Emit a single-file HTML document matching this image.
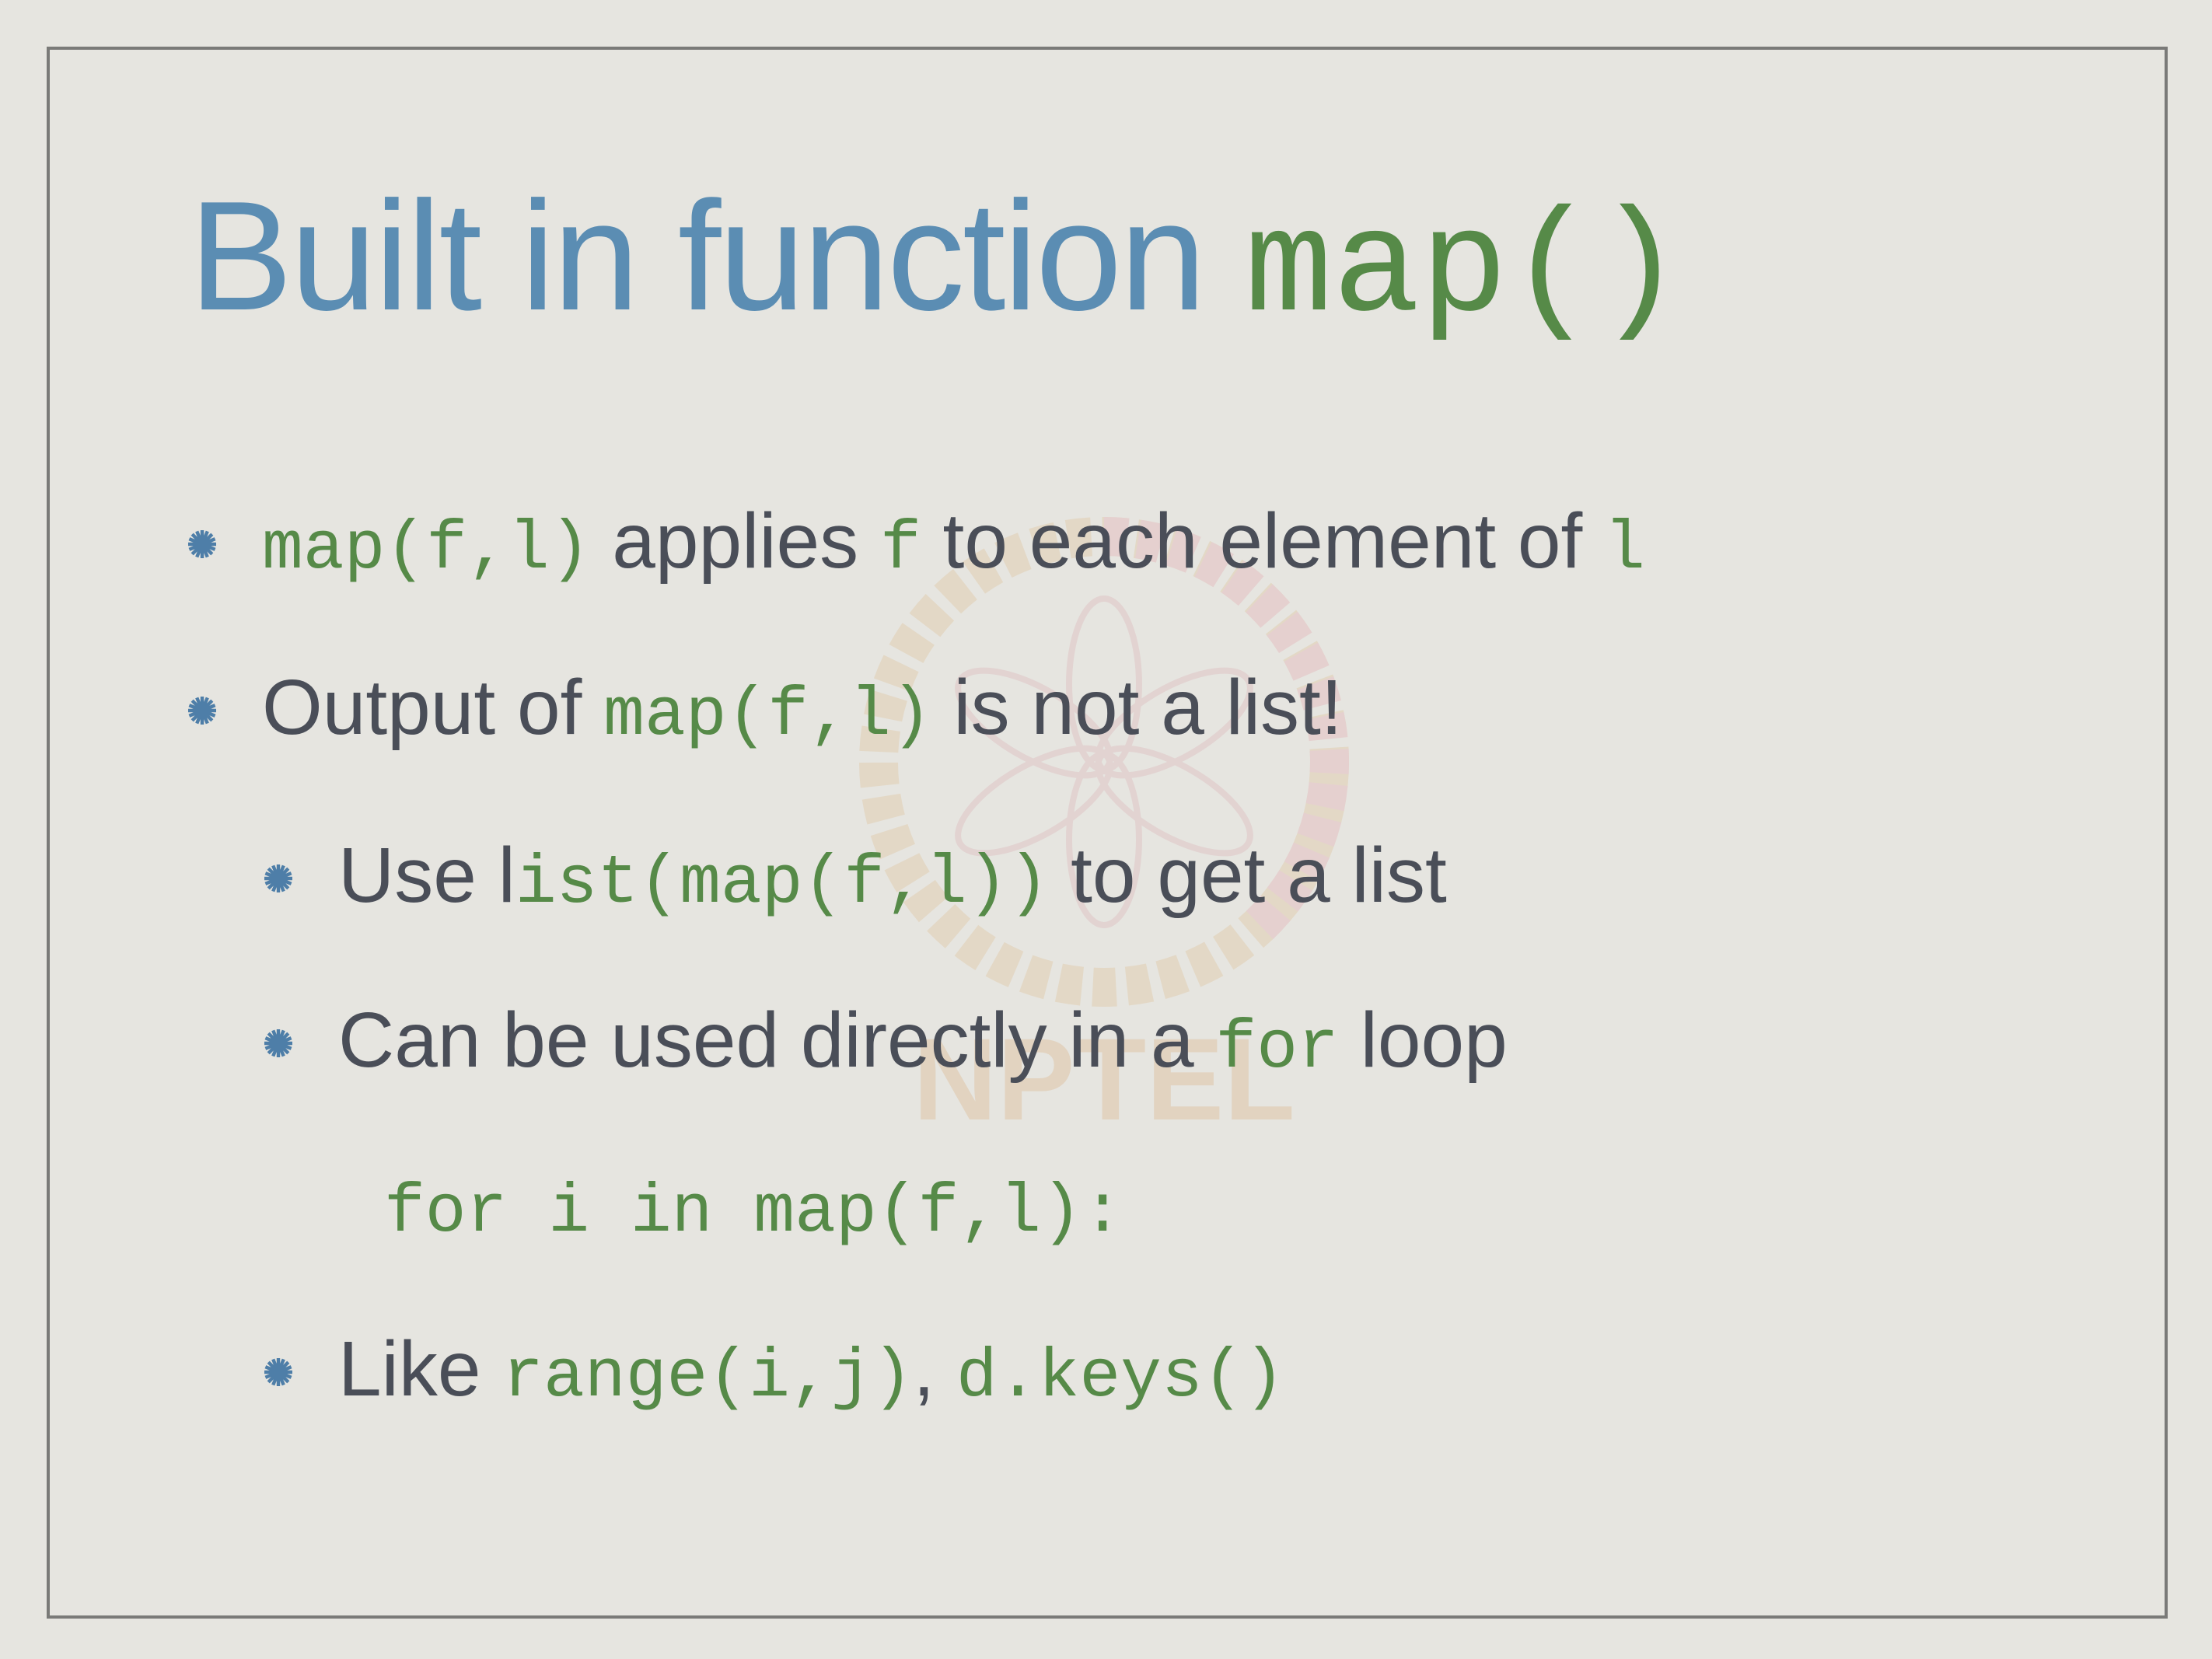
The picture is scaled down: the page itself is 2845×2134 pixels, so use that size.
<!DOCTYPE html>
<html><head><meta charset="utf-8"><style>
html,body{margin:0;padding:0}
body{width:2845px;height:2134px;background:#e6e5e0;position:relative;overflow:hidden;font-family:"Liberation Sans",sans-serif}
.frame{position:absolute;left:60px;top:60px;width:2720px;height:2014px;border:4px solid #7a7a78}
.l{position:absolute;line-height:1;white-space:pre;font-size:100px;color:#4a4e58;letter-spacing:0}
.m{font-family:"Liberation Mono",monospace;font-size:88px;color:#568a48;letter-spacing:0}
.b{position:absolute;width:40px;height:40px}
</style></head><body>
<svg style="position:absolute;left:0;top:0" width="2845" height="2134">
<g opacity="0.18">
<circle cx="1420" cy="980" r="290" fill="none" stroke="#d9a050" stroke-width="50" stroke-dasharray="30 14"/>
<path d="M1420 690 A290 290 0 0 1 1620 1190" fill="none" stroke="#e07080" stroke-width="50" stroke-dasharray="30 14"/>
<g fill="none" stroke="#d08090" stroke-width="8">
<ellipse cx="1420" cy="880" rx="45" ry="110"/>
<ellipse cx="1420" cy="1080" rx="45" ry="110"/>
<ellipse cx="1330" cy="930" rx="45" ry="110" transform="rotate(-60 1330 930)"/>
<ellipse cx="1510" cy="930" rx="45" ry="110" transform="rotate(60 1510 930)"/>
<ellipse cx="1330" cy="1030" rx="45" ry="110" transform="rotate(60 1330 1030)"/>
<ellipse cx="1510" cy="1030" rx="45" ry="110" transform="rotate(-60 1510 1030)"/>
</g>
<text x="1420" y="1440" text-anchor="middle" font-family="Liberation Sans" font-weight="bold" font-size="150" fill="#d08030">NPTEL</text>
</g>
</svg>
<div class="frame"></div>
<div class="l" style="left:243px;top:230px;font-size:200px;color:#5b8db3;letter-spacing:-3px">Built in function <span class="m" style="font-size:188px;letter-spacing:0">map()</span></div>

<svg class="b" style="left:240px;top:680px" viewBox="-10 -10 20 20"><g stroke="#4e7ea8" stroke-width="2.2"><path d="M0-9V9M-9 0H9M-6.4-6.4L6.4 6.4M-6.4 6.4L6.4-6.4M-3.4-8.3L3.4 8.3M3.4-8.3L-3.4 8.3M-8.3-3.4L8.3 3.4M-8.3 3.4L8.3-3.4"/></g></svg>
<div class="l" style="left:337px;top:646px"><span class="m">map(f,l)</span> applies <span class="m">f</span> to each element of <span class="m">l</span></div>

<svg class="b" style="left:240px;top:894px" viewBox="-10 -10 20 20"><g stroke="#4e7ea8" stroke-width="2.2"><path d="M0-9V9M-9 0H9M-6.4-6.4L6.4 6.4M-6.4 6.4L6.4-6.4M-3.4-8.3L3.4 8.3M3.4-8.3L-3.4 8.3M-8.3-3.4L8.3 3.4M-8.3 3.4L8.3-3.4"/></g></svg>
<div class="l" style="left:337px;top:860px">Output of <span class="m">map(f,l)</span> is not a list!</div>

<svg class="b" style="left:338px;top:1110px" viewBox="-10 -10 20 20"><g stroke="#4e7ea8" stroke-width="2.2"><path d="M0-9V9M-9 0H9M-6.4-6.4L6.4 6.4M-6.4 6.4L6.4-6.4M-3.4-8.3L3.4 8.3M3.4-8.3L-3.4 8.3M-8.3-3.4L8.3 3.4M-8.3 3.4L8.3-3.4"/></g></svg>
<div class="l" style="left:435px;top:1076px">Use l<span class="m">ist(map(f,l))</span> to get a list</div>

<svg class="b" style="left:338px;top:1322px" viewBox="-10 -10 20 20"><g stroke="#4e7ea8" stroke-width="2.2"><path d="M0-9V9M-9 0H9M-6.4-6.4L6.4 6.4M-6.4 6.4L6.4-6.4M-3.4-8.3L3.4 8.3M3.4-8.3L-3.4 8.3M-8.3-3.4L8.3 3.4M-8.3 3.4L8.3-3.4"/></g></svg>
<div class="l" style="left:435px;top:1288px">Can be used directly in a <span class="m">for</span> loop</div>

<div class="l" style="left:494px;top:1499px"><span class="m">for i in map(f,l):</span></div>

<svg class="b" style="left:338px;top:1745px" viewBox="-10 -10 20 20"><g stroke="#4e7ea8" stroke-width="2.2"><path d="M0-9V9M-9 0H9M-6.4-6.4L6.4 6.4M-6.4 6.4L6.4-6.4M-3.4-8.3L3.4 8.3M3.4-8.3L-3.4 8.3M-8.3-3.4L8.3 3.4M-8.3 3.4L8.3-3.4"/></g></svg>
<div class="l" style="left:435px;top:1711px">Like <span class="m">range(i,j)</span>, <span class="m">d.keys()</span></div>
</body></html>
